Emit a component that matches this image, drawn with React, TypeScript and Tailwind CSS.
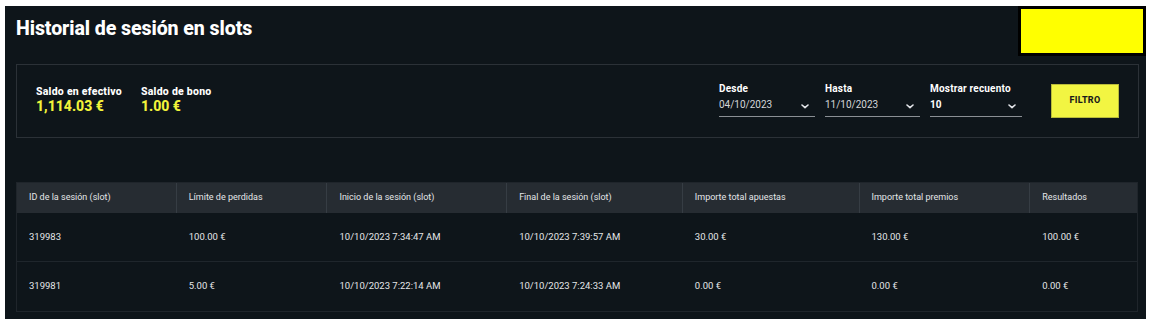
const columns = [
  { label: "ID de la sesión (slot)", w: "w-[160px]" },
  { label: "Límite de perdidas", w: "w-[151px]" },
  { label: "Inicio de la sesión (slot)", w: "w-[180px]" },
  { label: "Final de la sesión (slot)", w: "w-[176px]" },
  { label: "Importe total apuestas", w: "w-[177px]" },
  { label: "Importe total premios", w: "w-[171px]" },
  { label: "Resultados", w: "w-[107px]" },
];

const rows = [
  ["319983", "100.00 €", "10/10/2023 7:34:47 AM", "10/10/2023 7:39:57 AM", "30.00 €", "130.00 €", "100.00 €"],
  ["319981", "5.00 €", "10/10/2023 7:22:14 AM", "10/10/2023 7:24:33 AM", "0.00 €", "0.00 €", "0.00 €"],
];

function Chevron() {
  return (
    <svg width="8" height="5" viewBox="0 0 8 5" fill="none" className="mt-[3px]">
      <path d="M1 1l3 2.6L7 1" stroke="#e5e7eb" strokeWidth="1.6" strokeLinecap="round" strokeLinejoin="round" />
    </svg>
  );
}

function Field({ label, value, w, bold }: { label: string; value: string; w: string; bold?: boolean }) {
  return (
    <div className={`${w} flex flex-col`}>
      <span className="text-[10px] font-bold text-white leading-[12px] tracking-[0.2px]">{label}</span>
      <div className="flex items-center justify-between mt-[4px] pb-[5px] border-b border-[#8a8f94] pr-[6px]">
        <span className={`text-[10px] leading-[12px] ${bold ? "font-bold text-white" : "text-[#d4d6d8]"}`}>{value}</span>
        <Chevron />
      </div>
    </div>
  );
}

export default function App() {
  return (
    <div className="w-[1152px] h-[330px] bg-white pl-[5px] pt-[6px] font-['Roboto',sans-serif]">
      <div className="w-[1141px] h-[313px] bg-[#0e151a] pl-[11px] pr-[7px]">
        {/* Heading */}
        <div className="flex justify-between items-start h-[58px]">
          <h1 className="text-[19.6px] font-extrabold text-white mt-[11px] leading-[24px] tracking-[-0.1px]">
            Historial de sesión en slots
          </h1>
          <div className="w-[128px] h-[50px] bg-[#ffff00] border-[3px] border-black mr-[-7px]" />
        </div>

        {/* Balances + filters */}
        <div className="h-[74px] border border-[#2b3137] flex items-start justify-between pl-[19px] pr-[19px]">
          <div className="flex gap-[19px] mt-[21px]">
            <div className="flex flex-col">
              <span className="text-[10.5px] font-extrabold text-white leading-[12px] tracking-[0.25px]">Saldo en efectivo</span>
              <span className="text-[14px] font-extrabold text-[#f2f33a] leading-[16px]">1,114.03 €</span>
            </div>
            <div className="flex flex-col">
              <span className="text-[10.5px] font-extrabold text-white leading-[12px] tracking-[0.25px]">Saldo de bono</span>
              <span className="text-[14px] font-extrabold text-[#f2f33a] leading-[16px]">1.00 €</span>
            </div>
          </div>
          <div className="flex items-start mt-[18px]">
            <div className="flex gap-[10px]">
              <Field label="Desde" value="04/10/2023" w="w-[96px]" />
              <Field label="Hasta" value="11/10/2023" w="w-[95px]" />
              <Field label="Mostrar recuento" value="10" w="w-[92px]" bold />
            </div>
            <button className="ml-[29px] mt-[1px] w-[68px] h-[34px] bg-[#f2f542] border border-[#b9bb3a] text-[9px] font-extrabold text-[#1a1a1a] tracking-[0.3px]">
              FILTRO
            </button>
          </div>
        </div>

        {/* Table */}
        <div className="mt-[44px] border border-[#1f252b] w-[1122px]">
          <div className="flex h-[30px] bg-[#262c32]">
            {columns.map((c, i) => (
              <div
                key={c.label}
                className={`${c.w} flex items-center pl-[12px] text-[9px] text-[#e4e6e8] ${i < columns.length - 1 ? "border-r border-[#363d44]" : ""}`}
              >
                {c.label}
              </div>
            ))}
          </div>
          {rows.map((r, ri) => (
            <div key={ri} className={`flex h-[49px] ${ri < rows.length - 1 ? "border-b border-[#1f262c]" : ""}`}>
              {r.map((cell, ci) => (
                <div key={ci} className={`${columns[ci].w} flex items-center pl-[12px] text-[9.5px] text-[#e4e6e8]`}>
                  {cell}
                </div>
              ))}
            </div>
          ))}
        </div>
      </div>
    </div>
  );
}
